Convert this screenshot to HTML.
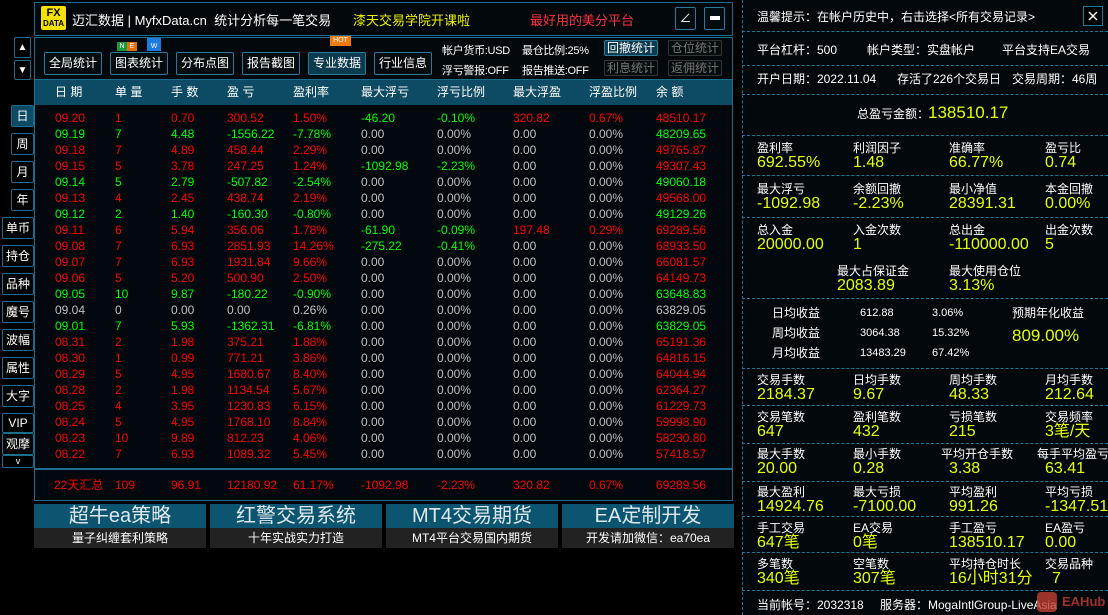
<!DOCTYPE html>
<html><head><meta charset="utf-8"><style>
*{margin:0;padding:0;box-sizing:border-box}
body{width:1108px;height:615px;background:#000;position:relative;overflow:hidden;font-family:"Liberation Sans","Noto Sans CJK SC",sans-serif;color:#fff;font-size:12px}
.a{position:absolute;white-space:nowrap}
.bx{position:absolute;border:1px solid #1b6e8e}
.btn{position:absolute;border:1px solid #2a7a9a;background:#050c10;color:#fff;font-size:12px;text-align:center;border-radius:2px}
.side{position:absolute;border:1px solid #1b6e8e;background:#000;color:#fff;font-size:12px;text-align:center;border-radius:2px}
.r{color:#f00}.g{color:#0f0}.z{color:#c0c0c0}.y{color:#e6ff00}
.row{position:absolute;left:34px;width:699px;height:16px;font-size:12px;line-height:16px}
.row span{position:absolute}
.c1{left:21px}.c2{left:81px}.c3{left:137px}.c4{left:193px}.c5{left:259px}.c6{left:327px}.c7{left:403px}.c8{left:479px}.c9{left:555px}.c10{left:622px}
.rp{position:absolute;left:742px;width:366px;top:0;height:615px;background:#03080c}
.sep{position:absolute;left:742px;width:366px;border-top:1px dashed #1a7a9a}
.l{position:absolute;font-size:12px;line-height:14px;color:#fff;white-space:nowrap}
.v{position:absolute;font-size:16px;line-height:18px;color:#e6ff00;white-space:nowrap}
.ad{position:absolute;top:504px;width:172px;height:44px}
.ad .t{height:24px;background:#0c5570;color:#dfe8ee;font-size:20px;text-align:center;line-height:24px}
.ad .b{height:20px;background:#222;color:#fff;font-size:12px;text-align:center;line-height:20px}
</style></head><body>
<!-- header -->
<div class="bx" style="left:34px;top:2px;width:699px;height:34px;background:#03080c"></div>
<div class="a" style="left:41px;top:6px;width:25px;height:24px;background:#f5e100;border-radius:2px;color:#000;font-weight:bold;font-size:11px;line-height:10px;text-align:center;padding-top:2px">FX<br><span style="font-size:8px">DATA</span></div>
<div class="a" style="left:72px;top:10px;font-size:13px">迈汇数据 | MyfxData.cn &nbsp;统计分析每一笔交易</div>
<div class="a" style="left:353px;top:10px;font-size:13px;color:#f0f000">漆天交易学院开课啦</div>
<div class="a" style="left:530px;top:10px;font-size:13px;color:#ff3040">最好用的美分平台</div>
<div class="btn" style="left:675px;top:7px;width:21px;height:23px;line-height:21px">∠</div>
<div class="btn" style="left:704px;top:7px;width:21px;height:23px;"><div style="width:10px;height:4px;background:#fff;margin:8px auto"></div></div>
<!-- toolbar -->
<div class="side" style="left:14px;top:37px;width:17px;height:21px;line-height:19px;font-size:10px">▲</div>
<div class="side" style="left:14px;top:60px;width:17px;height:20px;line-height:19px;font-size:10px">▼</div>
<div class="bx" style="left:34px;top:37px;width:699px;height:43px;background:#03080c"></div>
<div class="btn" style="left:44px;top:52px;width:58px;height:23px;line-height:21px">全局统计</div>
<div class="btn" style="left:110px;top:52px;width:58px;height:23px;line-height:21px">图表统计</div>
<div class="a" style="left:117px;top:42px;width:10px;height:9px;background:#1a9a3a;font-size:7px;text-align:center;line-height:9px">N</div>
<div class="a" style="left:127px;top:42px;width:10px;height:9px;background:#e07010;font-size:7px;text-align:center;line-height:9px">E</div>
<div class="a" style="left:147px;top:38px;width:14px;height:13px;background:#1a7ae0;font-size:7px;text-align:center;line-height:18px">W</div>
<div class="btn" style="left:176px;top:52px;width:58px;height:23px;line-height:21px">分布点图</div>
<div class="btn" style="left:242px;top:52px;width:58px;height:23px;line-height:21px">报告截图</div>
<div class="btn" style="left:308px;top:52px;width:58px;height:23px;line-height:21px;background:#0c3a4e">专业数据</div>
<div class="a" style="left:330px;top:36px;width:21px;height:10px;background:#f07a10;font-size:7px;text-align:center;line-height:10px">HOT</div>
<div class="btn" style="left:374px;top:52px;width:58px;height:23px;line-height:21px">行业信息</div>
<div class="a" style="left:442px;top:42px;font-size:11px;letter-spacing:-0.3px">帐户货币:USD</div>
<div class="a" style="left:522px;top:42px;font-size:11px;letter-spacing:-0.3px">最仓比例:25%</div>
<div class="a" style="left:442px;top:62px;font-size:11px;letter-spacing:-0.3px">浮亏警报:OFF</div>
<div class="a" style="left:522px;top:62px;font-size:11px;letter-spacing:-0.3px">报告推送:OFF</div>
<div class="btn" style="left:604px;top:40px;width:54px;height:16px;line-height:14px;background:#0d3a50">回撤统计</div>
<div class="btn" style="left:668px;top:40px;width:54px;height:16px;line-height:14px;color:#777;border-color:#333">仓位统计</div>
<div class="btn" style="left:604px;top:60px;width:54px;height:16px;line-height:14px;color:#777;border-color:#333">利息统计</div>
<div class="btn" style="left:668px;top:60px;width:54px;height:16px;line-height:14px;color:#777;border-color:#333">返佣统计</div>
<!-- table -->
<div class="bx" style="left:34px;top:79px;width:699px;height:390px;background:#02080d"></div>
<div class="a" style="left:35px;top:80px;width:697px;height:25px;background:#0d4a63"></div>
<div class="row" style="top:84px;color:#fff"><span class="c1">日 期</span><span class="c2">单 量</span><span class="c3">手 数</span><span class="c4">盈 亏</span><span class="c5">盈利率</span><span class="c6">最大浮亏</span><span class="c7">浮亏比例</span><span class="c8">最大浮盈</span><span class="c9">浮盈比例</span><span class="c10">余 额</span></div>
<div class="row r" style="top:110px"><span class="c1">09.20</span><span class="c2">1</span><span class="c3">0.70</span><span class="c4">300.52</span><span class="c5">1.50%</span><span class="c6 g">-46.20</span><span class="c7 g">-0.10%</span><span class="c8">320.82</span><span class="c9">0.67%</span><span class="c10">48510.17</span></div>
<div class="row g" style="top:126px"><span class="c1">09.19</span><span class="c2">7</span><span class="c3">4.48</span><span class="c4">-1556.22</span><span class="c5">-7.78%</span><span class="c6 z">0.00</span><span class="c7 z">0.00%</span><span class="c8 z">0.00</span><span class="c9 z">0.00%</span><span class="c10">48209.65</span></div>
<div class="row r" style="top:142px"><span class="c1">09.18</span><span class="c2">7</span><span class="c3">4.89</span><span class="c4">458.44</span><span class="c5">2.29%</span><span class="c6 z">0.00</span><span class="c7 z">0.00%</span><span class="c8 z">0.00</span><span class="c9 z">0.00%</span><span class="c10">49765.87</span></div>
<div class="row r" style="top:158px"><span class="c1">09.15</span><span class="c2">5</span><span class="c3">3.78</span><span class="c4">247.25</span><span class="c5">1.24%</span><span class="c6 g">-1092.98</span><span class="c7 g">-2.23%</span><span class="c8 z">0.00</span><span class="c9 z">0.00%</span><span class="c10">49307.43</span></div>
<div class="row g" style="top:174px"><span class="c1">09.14</span><span class="c2">5</span><span class="c3">2.79</span><span class="c4">-507.82</span><span class="c5">-2.54%</span><span class="c6 z">0.00</span><span class="c7 z">0.00%</span><span class="c8 z">0.00</span><span class="c9 z">0.00%</span><span class="c10">49060.18</span></div>
<div class="row r" style="top:190px"><span class="c1">09.13</span><span class="c2">4</span><span class="c3">2.45</span><span class="c4">438.74</span><span class="c5">2.19%</span><span class="c6 z">0.00</span><span class="c7 z">0.00%</span><span class="c8 z">0.00</span><span class="c9 z">0.00%</span><span class="c10">49568.00</span></div>
<div class="row g" style="top:206px"><span class="c1">09.12</span><span class="c2">2</span><span class="c3">1.40</span><span class="c4">-160.30</span><span class="c5">-0.80%</span><span class="c6 z">0.00</span><span class="c7 z">0.00%</span><span class="c8 z">0.00</span><span class="c9 z">0.00%</span><span class="c10">49129.26</span></div>
<div class="row r" style="top:222px"><span class="c1">09.11</span><span class="c2">6</span><span class="c3">5.94</span><span class="c4">356.06</span><span class="c5">1.78%</span><span class="c6 g">-61.90</span><span class="c7 g">-0.09%</span><span class="c8">197.48</span><span class="c9">0.29%</span><span class="c10">69289.56</span></div>
<div class="row r" style="top:238px"><span class="c1">09.08</span><span class="c2">7</span><span class="c3">6.93</span><span class="c4">2851.93</span><span class="c5">14.26%</span><span class="c6 g">-275.22</span><span class="c7 g">-0.41%</span><span class="c8 z">0.00</span><span class="c9 z">0.00%</span><span class="c10">68933.50</span></div>
<div class="row r" style="top:254px"><span class="c1">09.07</span><span class="c2">7</span><span class="c3">6.93</span><span class="c4">1931.84</span><span class="c5">9.66%</span><span class="c6 z">0.00</span><span class="c7 z">0.00%</span><span class="c8 z">0.00</span><span class="c9 z">0.00%</span><span class="c10">66081.57</span></div>
<div class="row r" style="top:270px"><span class="c1">09.06</span><span class="c2">5</span><span class="c3">5.20</span><span class="c4">500.90</span><span class="c5">2.50%</span><span class="c6 z">0.00</span><span class="c7 z">0.00%</span><span class="c8 z">0.00</span><span class="c9 z">0.00%</span><span class="c10">64149.73</span></div>
<div class="row g" style="top:286px"><span class="c1">09.05</span><span class="c2">10</span><span class="c3">9.87</span><span class="c4">-180.22</span><span class="c5">-0.90%</span><span class="c6 z">0.00</span><span class="c7 z">0.00%</span><span class="c8 z">0.00</span><span class="c9 z">0.00%</span><span class="c10">63648.83</span></div>
<div class="row z" style="top:302px"><span class="c1">09.04</span><span class="c2">0</span><span class="c3">0.00</span><span class="c4">0.00</span><span class="c5">0.26%</span><span class="c6">0.00</span><span class="c7">0.00%</span><span class="c8">0.00</span><span class="c9">0.00%</span><span class="c10">63829.05</span></div>
<div class="row g" style="top:318px"><span class="c1">09.01</span><span class="c2">7</span><span class="c3">5.93</span><span class="c4">-1362.31</span><span class="c5">-6.81%</span><span class="c6 z">0.00</span><span class="c7 z">0.00%</span><span class="c8 z">0.00</span><span class="c9 z">0.00%</span><span class="c10">63829.05</span></div>
<div class="row r" style="top:334px"><span class="c1">08.31</span><span class="c2">2</span><span class="c3">1.98</span><span class="c4">375.21</span><span class="c5">1.88%</span><span class="c6 z">0.00</span><span class="c7 z">0.00%</span><span class="c8 z">0.00</span><span class="c9 z">0.00%</span><span class="c10">65191.36</span></div>
<div class="row r" style="top:350px"><span class="c1">08.30</span><span class="c2">1</span><span class="c3">0.99</span><span class="c4">771.21</span><span class="c5">3.86%</span><span class="c6 z">0.00</span><span class="c7 z">0.00%</span><span class="c8 z">0.00</span><span class="c9 z">0.00%</span><span class="c10">64816.15</span></div>
<div class="row r" style="top:366px"><span class="c1">08.29</span><span class="c2">5</span><span class="c3">4.95</span><span class="c4">1680.67</span><span class="c5">8.40%</span><span class="c6 z">0.00</span><span class="c7 z">0.00%</span><span class="c8 z">0.00</span><span class="c9 z">0.00%</span><span class="c10">64044.94</span></div>
<div class="row r" style="top:382px"><span class="c1">08.28</span><span class="c2">2</span><span class="c3">1.98</span><span class="c4">1134.54</span><span class="c5">5.67%</span><span class="c6 z">0.00</span><span class="c7 z">0.00%</span><span class="c8 z">0.00</span><span class="c9 z">0.00%</span><span class="c10">62364.27</span></div>
<div class="row r" style="top:398px"><span class="c1">08.25</span><span class="c2">4</span><span class="c3">3.95</span><span class="c4">1230.83</span><span class="c5">6.15%</span><span class="c6 z">0.00</span><span class="c7 z">0.00%</span><span class="c8 z">0.00</span><span class="c9 z">0.00%</span><span class="c10">61229.73</span></div>
<div class="row r" style="top:414px"><span class="c1">08.24</span><span class="c2">5</span><span class="c3">4.95</span><span class="c4">1768.10</span><span class="c5">8.84%</span><span class="c6 z">0.00</span><span class="c7 z">0.00%</span><span class="c8 z">0.00</span><span class="c9 z">0.00%</span><span class="c10">59998.90</span></div>
<div class="row r" style="top:430px"><span class="c1">08.23</span><span class="c2">10</span><span class="c3">9.89</span><span class="c4">812.23</span><span class="c5">4.06%</span><span class="c6 z">0.00</span><span class="c7 z">0.00%</span><span class="c8 z">0.00</span><span class="c9 z">0.00%</span><span class="c10">58230.80</span></div>
<div class="row r" style="top:446px"><span class="c1">08.22</span><span class="c2">7</span><span class="c3">6.93</span><span class="c4">1089.32</span><span class="c5">5.45%</span><span class="c6 z">0.00</span><span class="c7 z">0.00%</span><span class="c8 z">0.00</span><span class="c9 z">0.00%</span><span class="c10">57418.57</span></div>
<!-- summary -->
<div class="bx" style="left:34px;top:469px;width:699px;height:32px;background:#02080d"></div>
<div class="row r" style="top:477px"><span style="left:20px">22天汇总</span><span class="c2">109</span><span class="c3">96.91</span><span class="c4">12180.92</span><span class="c5">61.17%</span><span class="c6">-1092.98</span><span class="c7">-2.23%</span><span class="c8">320.82</span><span class="c9">0.67%</span><span class="c10">69289.56</span></div>
<!-- sidebar -->
<div class="side" style="left:11px;top:105px;width:23px;height:22px;line-height:20px;background:#0d4a63">日</div>
<div class="side" style="left:11px;top:133px;width:23px;height:22px;line-height:20px">周</div>
<div class="side" style="left:11px;top:161px;width:23px;height:22px;line-height:20px">月</div>
<div class="side" style="left:11px;top:189px;width:23px;height:22px;line-height:20px">年</div>
<div class="side" style="left:2px;top:217px;width:32px;height:22px;line-height:20px">单币</div>
<div class="side" style="left:2px;top:245px;width:32px;height:22px;line-height:20px">持仓</div>
<div class="side" style="left:2px;top:273px;width:32px;height:22px;line-height:20px">品种</div>
<div class="side" style="left:2px;top:301px;width:32px;height:22px;line-height:20px">魔号</div>
<div class="side" style="left:2px;top:329px;width:32px;height:22px;line-height:20px">波幅</div>
<div class="side" style="left:2px;top:357px;width:32px;height:22px;line-height:20px">属性</div>
<div class="side" style="left:2px;top:385px;width:32px;height:22px;line-height:20px">大字</div>
<div class="side" style="left:2px;top:413px;width:32px;height:20px;line-height:18px">VIP</div>
<div class="side" style="left:2px;top:433px;width:32px;height:22px;line-height:20px">观摩</div>
<div class="side" style="left:2px;top:455px;width:32px;height:13px;line-height:10px;font-size:9px">v</div>
<!-- ads -->
<div class="ad" style="left:34px"><div class="t">超牛ea策略</div><div class="b">量子纠缠套利策略</div></div>
<div class="ad" style="left:210px"><div class="t">红警交易系统</div><div class="b">十年实战实力打造</div></div>
<div class="ad" style="left:386px"><div class="t">MT4交易期货</div><div class="b">MT4平台交易国内期货</div></div>
<div class="ad" style="left:562px"><div class="t">EA定制开发</div><div class="b">开发请加微信：ea70ea</div></div>
<!-- right panel -->
<div class="rp"></div>
<div class="a" style="left:742px;top:0;height:615px;border-left:1px dashed #1a7a9a"></div>
<div class="l" style="left:757px;top:10px">温馨提示：在帐户历史中，右击选择&lt;所有交易记录&gt;</div>
<div class="a" style="left:1083px;top:6px;width:20px;height:20px;border:1px solid #1a7a9a;background:#000"><svg width="18" height="18" viewBox="0 0 18 18"><path d="M5 5L13 13M13 5L5 13" stroke="#fff" stroke-width="1.5"/></svg></div>
<div class="sep" style="top:31px"></div>
<div class="l" style="left:757px;top:43px">平台杠杆：500</div><div class="l" style="left:867px;top:43px">帐户类型：实盘帐户</div><div class="l" style="left:1002px;top:43px">平台支持EA交易</div>
<div class="sep" style="top:65px"></div>
<div class="l" style="left:757px;top:72px">开户日期：2022.11.04</div><div class="l" style="left:897px;top:72px">存活了226个交易日</div><div class="l" style="left:1012px;top:72px">交易周期：46周</div>
<div class="sep" style="top:94px"></div>
<div class="l" style="left:857px;top:107px">总盈亏金额：</div><div class="v" style="left:928px;top:104px;font-size:17px">138510.17</div>
<div class="sep" style="top:135px"></div>
<div class="l" style="left:757px;top:141px">盈利率</div><div class="l" style="left:853px;top:141px">利润因子</div><div class="l" style="left:949px;top:141px">准确率</div><div class="l" style="left:1045px;top:141px">盈亏比</div>
<div class="v" style="left:757px;top:154px">692.55%</div><div class="v" style="left:853px;top:154px">1.48</div><div class="v" style="left:949px;top:154px">66.77%</div><div class="v" style="left:1045px;top:154px">0.74</div>
<div class="sep" style="top:175px"></div>
<div class="l" style="left:757px;top:182px">最大浮亏</div><div class="l" style="left:853px;top:182px">余额回撤</div><div class="l" style="left:949px;top:182px">最小净值</div><div class="l" style="left:1045px;top:182px">本金回撤</div>
<div class="v" style="left:757px;top:195px">-1092.98</div><div class="v" style="left:853px;top:195px">-2.23%</div><div class="v" style="left:949px;top:195px">28391.31</div><div class="v" style="left:1045px;top:195px">0.00%</div>
<div class="sep" style="top:217px"></div>
<div class="l" style="left:757px;top:223px">总入金</div><div class="l" style="left:853px;top:223px">入金次数</div><div class="l" style="left:949px;top:223px">总出金</div><div class="l" style="left:1045px;top:223px">出金次数</div>
<div class="v" style="left:757px;top:236px">20000.00</div><div class="v" style="left:853px;top:236px">1</div><div class="v" style="left:949px;top:236px">-110000.00</div><div class="v" style="left:1045px;top:236px">5</div>
<div class="l" style="left:837px;top:264px">最大占保证金</div><div class="l" style="left:949px;top:264px">最大使用仓位</div>
<div class="v" style="left:837px;top:277px">2083.89</div><div class="v" style="left:949px;top:277px">3.13%</div>
<div class="sep" style="top:298px"></div>
<div class="l" style="left:772px;top:306px">日均收益</div><div class="l" style="left:860px;top:306px;font-size:11px">612.88</div><div class="l" style="left:932px;top:306px;font-size:11px">3.06%</div><div class="l" style="left:1012px;top:306px">预期年化收益</div>
<div class="l" style="left:772px;top:326px">周均收益</div><div class="l" style="left:860px;top:326px;font-size:11px">3064.38</div><div class="l" style="left:932px;top:326px;font-size:11px">15.32%</div>
<div class="v" style="left:1012px;top:327px;font-size:17px">809.00%</div>
<div class="l" style="left:772px;top:346px">月均收益</div><div class="l" style="left:860px;top:346px;font-size:11px">13483.29</div><div class="l" style="left:932px;top:346px;font-size:11px">67.42%</div>
<div class="sep" style="top:368px"></div>
<div class="l" style="left:757px;top:373px">交易手数</div><div class="l" style="left:853px;top:373px">日均手数</div><div class="l" style="left:949px;top:373px">周均手数</div><div class="l" style="left:1045px;top:373px">月均手数</div>
<div class="v" style="left:757px;top:386px">2184.37</div><div class="v" style="left:853px;top:386px">9.67</div><div class="v" style="left:949px;top:386px">48.33</div><div class="v" style="left:1045px;top:386px">212.64</div>
<div class="sep" style="top:405px"></div>
<div class="l" style="left:757px;top:410px">交易笔数</div><div class="l" style="left:853px;top:410px">盈利笔数</div><div class="l" style="left:949px;top:410px">亏损笔数</div><div class="l" style="left:1045px;top:410px">交易频率</div>
<div class="v" style="left:757px;top:423px">647</div><div class="v" style="left:853px;top:423px">432</div><div class="v" style="left:949px;top:423px">215</div><div class="v" style="left:1045px;top:423px">3笔/天</div>
<div class="sep" style="top:443px"></div>
<div class="l" style="left:757px;top:447px">最大手数</div><div class="l" style="left:853px;top:447px">最小手数</div><div class="l" style="left:941px;top:447px">平均开仓手数</div><div class="l" style="left:1037px;top:447px">每手平均盈亏</div>
<div class="v" style="left:757px;top:460px">20.00</div><div class="v" style="left:853px;top:460px">0.28</div><div class="v" style="left:949px;top:460px">3.38</div><div class="v" style="left:1045px;top:460px">63.41</div>
<div class="sep" style="top:481px"></div>
<div class="l" style="left:757px;top:485px">最大盈利</div><div class="l" style="left:853px;top:485px">最大亏损</div><div class="l" style="left:949px;top:485px">平均盈利</div><div class="l" style="left:1045px;top:485px">平均亏损</div>
<div class="v" style="left:757px;top:498px">14924.76</div><div class="v" style="left:853px;top:498px">-7100.00</div><div class="v" style="left:949px;top:498px">991.26</div><div class="v" style="left:1045px;top:498px">-1347.51</div>
<div class="sep" style="top:516px"></div>
<div class="l" style="left:757px;top:521px">手工交易</div><div class="l" style="left:853px;top:521px">EA交易</div><div class="l" style="left:949px;top:521px">手工盈亏</div><div class="l" style="left:1045px;top:521px">EA盈亏</div>
<div class="v" style="left:757px;top:534px">647笔</div><div class="v" style="left:853px;top:534px">0笔</div><div class="v" style="left:949px;top:534px">138510.17</div><div class="v" style="left:1045px;top:534px">0.00</div>
<div class="sep" style="top:552px"></div>
<div class="l" style="left:757px;top:557px">多笔数</div><div class="l" style="left:853px;top:557px">空笔数</div><div class="l" style="left:949px;top:557px">平均持仓时长</div><div class="l" style="left:1045px;top:557px">交易品种</div>
<div class="v" style="left:757px;top:570px">340笔</div><div class="v" style="left:853px;top:570px">307笔</div><div class="v" style="left:949px;top:570px">16小时31分</div><div class="v" style="left:1052px;top:570px">7</div>
<div class="sep" style="top:590px"></div>
<div class="l" style="left:757px;top:598px">当前帐号：2032318</div><div class="l" style="left:880px;top:598px">服务器：MogaIntlGroup-LiveAsia</div>
<div class="a" style="left:1037px;top:592px;width:20px;height:20px;background:#c04030;border-radius:4px;opacity:.8"></div>
<div class="a" style="left:1062px;top:594px;font-size:13px;font-weight:bold;color:#a03028">EAHub</div>
</body></html>
